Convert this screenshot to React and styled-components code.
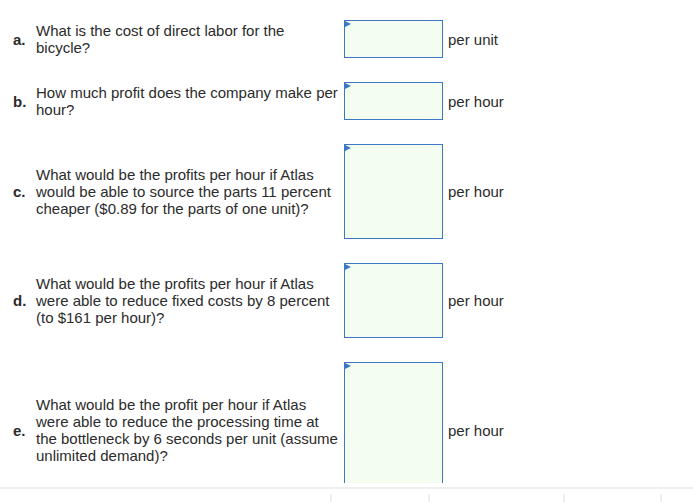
import styled, { createGlobalStyle } from "styled-components"

const GlobalStyle = createGlobalStyle`
    html, body {
        margin: 0;
        padding: 0;
        background: #ffffff;
    }
    body {
        font-family: "Liberation Sans", Arial, sans-serif;
        color: #2b2b2b;
    }
`

const Page = styled.div`
    width: 693px;
    height: 502px;
    overflow: hidden;
    display: flex;
    flex-direction: column;
`

const Questions = styled.div`
    height: 463px;
    flex-shrink: 0;
    padding-top: 20px;
    overflow: hidden;
    display: flex;
    flex-direction: column;
    gap: 24px;
`

const Row = styled.div`
    display: flex;
    align-items: center;
    flex-shrink: 0;
    padding-left: 13px;
    font-size: 15px;
    line-height: 17px;
`

const Letter = styled.span`
    width: 23px;
    flex-shrink: 0;
    font-weight: 700;
`

const Question = styled.div`
    width: 304px;
    flex-shrink: 0;
    margin-right: 4px;
`

const AnswerBox = styled.div`
    position: relative;
    box-sizing: border-box;
    width: 99px;
    height: ${(props) => props.boxHeight}px;
    flex-shrink: 0;
    border: 1px solid #3b77c2;
    background: #f3fdf0;
`

const Flag = styled.span`
    position: absolute;
    top: 0;
    left: 0;
    width: 0;
    height: 0;
    border-top: 3px solid transparent;
    border-bottom: 3px solid transparent;
    border-left: 6px solid #3b77c2;
`

const Unit = styled.span`
    margin-left: 5px;
`

const Divider = styled.div`
    flex-shrink: 0;
    margin-top: 4px;
    border-top: 2px solid #eeeeee;
`

const Footer = styled.div`
    display: flex;
    flex-shrink: 0;
    padding-top: 5px;
    height: 20px;
`

const FooterCell = styled.div`
    box-sizing: border-box;
    width: ${(props) => props.cellWidth}px;
    flex-shrink: 0;
    border-left: ${(props) => (props.first ? "none" : "2px solid #eeeeee")};
`

const rows = [
    {
        letter: "a.",
        text: "What is the cost of direct labor for the bicycle?",
        unit: "per unit",
        height: 38,
    },
    {
        letter: "b.",
        text: "How much profit does the company make per hour?",
        unit: "per hour",
        height: 38,
    },
    {
        letter: "c.",
        text: "What would be the profits per hour if Atlas would be able to source the parts 11 percent cheaper ($0.89 for the parts of one unit)?",
        unit: "per hour",
        height: 95,
    },
    {
        letter: "d.",
        text: "What would be the profits per hour if Atlas were able to reduce fixed costs by 8 percent (to $161 per hour)?",
        unit: "per hour",
        height: 75,
    },
    {
        letter: "e.",
        text: "What would be the profit per hour if Atlas were able to reduce the processing time at the bottleneck by 6 seconds per unit (assume unlimited demand)?",
        unit: "per hour",
        height: 136,
    },
]

const footerCells = [330, 98, 135, 97, 33]

function App() {
    return (
        <Page>
            <GlobalStyle />
            <Questions>
                {rows.map((row) => (
                    <Row key={row.letter}>
                        <Letter>{row.letter}</Letter>
                        <Question>{row.text}</Question>
                        <AnswerBox boxHeight={row.height}>
                            <Flag />
                        </AnswerBox>
                        <Unit>{row.unit}</Unit>
                    </Row>
                ))}
            </Questions>
            <Divider />
            <Footer>
                {footerCells.map((w, index) => (
                    <FooterCell
                        key={`cell-${index}`}
                        cellWidth={w}
                        first={index === 0}
                    />
                ))}
            </Footer>
        </Page>
    )
}

export default App
